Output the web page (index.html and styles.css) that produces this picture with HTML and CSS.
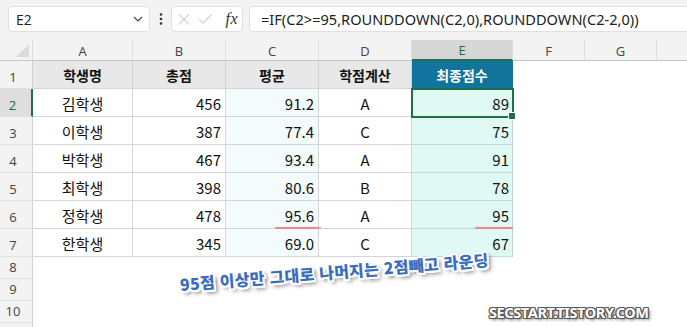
FILE: index.html
```html
<!DOCTYPE html>
<html lang="ko">
<head>
<meta charset="utf-8">
<link rel="stylesheet" href="styles.css">
</head>
<body>
<div class="page">
  <div class="toolbar">
    <div class="namebox">
      <span class="name">E2</span>
      <svg class="chev" width="10" height="6" viewBox="0 0 10 6"><path d="M1 1 L5 5 L9 1" fill="none" stroke="#444" stroke-width="1.2"/></svg>
    </div>
    <svg class="dots" width="4" height="12" viewBox="0 0 4 12"><circle cx="2" cy="1.5" r="1.3" fill="#333"/><circle cx="2" cy="6" r="1.3" fill="#333"/><circle cx="2" cy="10.5" r="1.3" fill="#333"/></svg>
    <div class="fxbox">
      <svg width="13" height="13" viewBox="0 0 13 13"><path d="M1 1 L12 12 M12 1 L1 12" stroke="#c4c4c4" stroke-width="1.1" fill="none"/></svg>
      <svg width="16" height="12" viewBox="0 0 16 12"><path d="M1 6 L5.5 10.5 L15 1" stroke="#c4c4c4" stroke-width="1.1" fill="none"/></svg>
      <span class="fx">fx</span>
    </div>
    <div class="formula">=IF(C2&gt;=95,ROUNDDOWN(C2,0),ROUNDDOWN(C2-2,0))</div>
  </div>

  <div class="sheet">
    <div class="corner"><span class="tri"></span></div>
    <div class="colh">A</div><div class="colh">B</div><div class="colh">C</div><div class="colh">D</div><div class="colh sel">E</div><div class="colh">F</div><div class="colh">G</div><div class="colh last"></div>

    <div class="rowh">1</div>
    <div class="c th">학생명</div><div class="c th">총점</div><div class="c th">평균</div><div class="c th">학점계산</div><div class="c th hl">최종점수</div><div class="e"></div><div class="e"></div><div class="e"></div>

    <div class="rowh sel">2</div>
    <div class="c ctr">김학생</div><div class="c num">456</div><div class="c num avg">91.2</div><div class="c ctr">A</div><div class="c num fin active">89<span class="handle"></span></div><div class="e"></div><div class="e"></div><div class="e"></div>

    <div class="rowh">3</div>
    <div class="c ctr">이학생</div><div class="c num">387</div><div class="c num avg">77.4</div><div class="c ctr">C</div><div class="c num fin">75</div><div class="e"></div><div class="e"></div><div class="e"></div>

    <div class="rowh">4</div>
    <div class="c ctr">박학생</div><div class="c num">467</div><div class="c num avg">93.4</div><div class="c ctr">A</div><div class="c num fin">91</div><div class="e"></div><div class="e"></div><div class="e"></div>

    <div class="rowh">5</div>
    <div class="c ctr">최학생</div><div class="c num">398</div><div class="c num avg">80.6</div><div class="c ctr">B</div><div class="c num fin">78</div><div class="e"></div><div class="e"></div><div class="e"></div>

    <div class="rowh">6</div>
    <div class="c ctr">정학생</div><div class="c num">478</div><div class="c num avg">95.6<span class="mark mark-c"></span></div><div class="c ctr">A</div><div class="c num fin">95<span class="mark mark-e"></span></div><div class="e"></div><div class="e"></div><div class="e"></div>

    <div class="rowh">7</div>
    <div class="c ctr">한학생</div><div class="c num">345</div><div class="c num avg">69.0</div><div class="c ctr">C</div><div class="c num fin">67</div><div class="e"></div><div class="e"></div><div class="e"></div>

    <div class="rowh">8</div><div class="e span"></div>
    <div class="rowh">9</div><div class="e span"></div>
    <div class="rowh">10</div><div class="e span"></div>
    <div class="rowh"></div><div class="e span"></div>
  </div>

  <div class="caption">95점 이상만 그대로 나머지는 2점빼고 라운딩</div>
  <div class="watermark">SECSTART.TISTORY.COM</div>
</div>
</body>
</html>
```
FILE: styles.css
```css
* { box-sizing: border-box; }
html, body { margin: 0; padding: 0; background: #fff; }
body { font-family: "Noto Sans CJK KR", "Noto Sans", sans-serif; overflow: hidden; }
.page { position: relative; width: 687px; height: 327px; overflow: hidden; }

.toolbar {
  height: 40px;
  background: #f3f3f3;
  display: flex;
  align-items: flex-start;
  padding: 6px 0 0 8px;
}
.namebox {
  width: 142px; height: 26px;
  background: #fff;
  border: 1px solid #e0e0e0;
  border-radius: 4px;
  display: flex; align-items: center; justify-content: space-between;
  padding: 0 6px 0 7px;
}
.name { font-family: "Open Sans", "Noto Sans", sans-serif; font-size: 14px; color: #222; }
.dots { margin: 7px 0 0 9px; }
.fxbox {
  margin-left: 8px;
  width: 72px; height: 26px;
  background: #fff;
  border: 1px solid #e0e0e0;
  border-radius: 4px;
  display: flex; align-items: center;
  padding: 0 4px 0 6px;
  gap: 8px;
}
.fx { font-family: "Liberation Serif", "DejaVu Serif", serif; font-style: italic; font-size: 16px; color: #333; margin-left: 5px; letter-spacing: 0.5px; }
.formula {
  margin-left: 6px;
  flex: 1;
  height: 26px;
  background: #fff;
  border: 1px solid #e0e0e0;
  border-right: none;
  border-radius: 4px 0 0 4px;
  padding: 0 0 0 11px;
  font-family: "Noto Sans", "Open Sans", sans-serif;
  font-size: 14.6px;
  line-height: 24px;
  color: #222;
  white-space: nowrap;
}

.sheet {
  display: grid;
  grid-template-columns: 33px 100px 93px 93px 93px 101px 72px 72px 1fr;
  grid-template-rows: 21px repeat(7, 28px) repeat(4, 22px);
  background: #fff;
}
.corner {
  background: #f3f3f3;
  border-right: 1px solid #dcdcdc;
  border-bottom: 1px solid #c8c8c8;
  position: relative;
}
.tri {
  position: absolute; right: 3px; bottom: 3px;
  width: 0; height: 0;
  border-left: 13px solid transparent;
  border-bottom: 13px solid #dcdcdc;
}
.colh {
  background: #f3f3f3;
  border-right: 1px solid #dedede;
  border-bottom: 1px solid #c4c4c4;
  font-family: "Open Sans", "Noto Sans", sans-serif;
  font-size: 13px;
  color: #444;
  display: flex; align-items: center; justify-content: center;
  padding-top: 1px;
}
.colh.last { border-right: none; }
.colh.sel { background: #d6d6d6; color: #1e6b41; border-bottom: 2px solid #1e7145; }
.rowh {
  background: #f3f3f3;
  border-right: 1px solid #d0d0d0;
  border-bottom: 1px solid #e2e2e2;
  font-family: "Open Sans", "Noto Sans", sans-serif;
  font-size: 13px;
  color: #444;
  display: flex; align-items: flex-end; justify-content: center;
  padding-bottom: 2px;
  padding-right: 6px;
}
.rowh.sel { background: #dedede; color: #1e6b41; border-right: 2px solid #1e7145; }

.c {
  border-right: 1px solid #d4d4d4;
  border-bottom: 1px solid #d4d4d4;
  font-size: 15px;
  color: #111;
  display: flex; align-items: center;
  position: relative;
  padding-top: 1px;
}
.th { background: #e8e8e8; font-weight: 700; font-size: 14px; justify-content: center; }
.th.hl { background: #12739c; color: #fff; border-right-color: #12739c; border-bottom-color: #12739c; }
.ctr { justify-content: center; }
.num { justify-content: flex-end; padding-right: 4px; }
.avg { background: #f4fbfc; }
.fin { background: #e1f9f4; border-right-color: #bcd3cf; border-bottom-color: #c3dcd8; padding-right: 3px; }
.active { outline: 2px solid #1e7145; outline-offset: -1px; z-index: 2; }
.handle {
  position: absolute; right: -4px; bottom: -4px;
  width: 6px; height: 6px;
  background: #1e7145;
  border: 1px solid #fff;
  box-sizing: content-box;
}
.e { background: #fff; }
.span { grid-column: 2 / -1; }

.mark {
  position: absolute;
  height: 2px;
  background: #ea8a8a;
  bottom: -1px;
  box-shadow: 0 0 1px #f0a0a0;
  border-radius: 1px;
}
.mark-c { left: 49px; right: -3px; }
.mark-e { left: 63px; right: -1px; }

.caption {
  position: absolute;
  left: 180px; top: 272px;
  font-family: "Noto Sans CJK KR", sans-serif;
  font-weight: 900;
  font-size: 16px;
  color: #3b6dbf;
  white-space: nowrap;
  transform: rotate(-4.6deg);
  transform-origin: left center;
  letter-spacing: 0.3px;
  text-shadow:
    1px 0 0 #fff, -1px 0 0 #fff, 0 1px 0 #fff, 0 -1px 0 #fff,
    1px 1px 0 #fff, -1px -1px 0 #fff, 1px -1px 0 #fff, -1px 1px 0 #fff,
    2px 0 0 #fff, 0 2px 0 #fff, -2px 0 0 #fff, 0 -2px 0 #fff,
    2px 2px 0 #fff, -2px 2px 0 #fff,
    3px 3px 4px rgba(0,0,0,0.7);
}
.watermark {
  position: absolute;
  left: 489px; top: 302px;
  font-family: "Noto Sans", "Open Sans", sans-serif;
  font-weight: 700;
  font-size: 14.5px;
  color: #fff;
  letter-spacing: -0.4px;
  white-space: nowrap;
  text-shadow:
    1px 0 0 #5a5a5a, -1px 0 0 #5a5a5a, 0 1px 0 #5a5a5a, 0 -1px 0 #5a5a5a,
    1px 1px 0 #5a5a5a, -1px -1px 0 #5a5a5a, 1px -1px 0 #5a5a5a, -1px 1px 0 #5a5a5a,
    2px 2px 3px rgba(0,0,0,0.6);
}
```
